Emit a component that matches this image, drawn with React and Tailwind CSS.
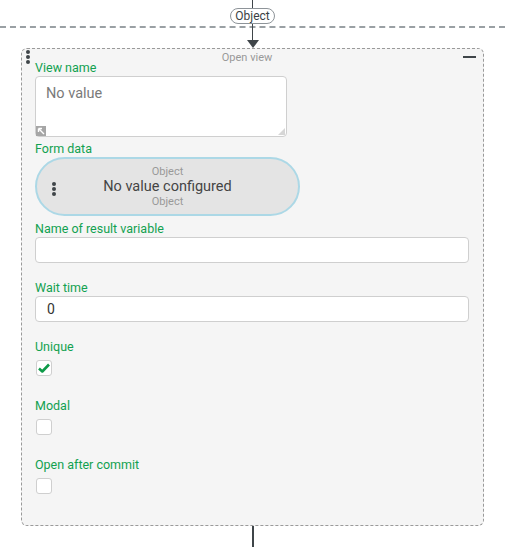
import { useState } from "react";

const font = { fontFamily: "Roboto, 'Liberation Sans', sans-serif" };

function Kebab({ className = "" }) {
  return (
    <div className={`flex flex-col gap-[1.5px] ${className}`}>
      <span className="block w-[3.5px] h-[3.5px] rounded-full bg-[#3f4549]" />
      <span className="block w-[3.5px] h-[3.5px] rounded-full bg-[#3f4549]" />
      <span className="block w-[3.5px] h-[3.5px] rounded-full bg-[#3f4549]" />
    </div>
  );
}

function Label({ children, className = "" }) {
  return (
    <div className={`text-[12.5px] leading-[16px] text-[#12a150] ${className}`}>
      {children}
    </div>
  );
}

function Checkbox({ checked }) {
  return (
    <div className="w-[16px] h-[16px] ml-[1px] rounded-[3px] border border-[#cfcfcf] bg-white flex items-center justify-center">
      {checked && (
        <svg width="12" height="10" viewBox="0 0 12 10">
          <path d="M1 5.5 L4.3 8.5 L11 1.5" fill="none" stroke="#0e9a48" strokeWidth="2.6" strokeLinejoin="round" />
        </svg>
      )}
    </div>
  );
}

export default function App() {
  const [unique, setUnique] = useState(true);

  return (
    <div className="relative w-[505px] h-[547px] bg-white overflow-hidden" style={font}>
      {/* lane separator */}
      <div className="absolute left-0 right-0 top-[26px] border-t-2 border-dashed border-[#9aa0a4]" />

      {/* incoming connector */}
      <div className="relative flex flex-col items-center ml-[6px] w-[493px]">
        <div className="w-[1.5px] h-[8px] bg-[#3f4549]" />
        <div className="px-[4px] h-[16px] leading-[14px] text-[12px] text-[#3a3f44] bg-white border border-[#8e9499] rounded-full">
          Object
        </div>
        <div className="w-[1.5px] h-[16px] bg-[#3f4549]" />
        <svg width="12" height="8" viewBox="0 0 12 8" className="block">
          <path d="M0 0 L12 0 L6 8 Z" fill="#3f4549" />
        </svg>
      </div>

      {/* node card */}
      <div className="relative ml-[21px] w-[463px] h-[478px] bg-[#f5f5f5] border border-dashed border-[#9a9a9a] rounded-[6px] pl-[13px] pr-[14px]">
        <Kebab className="absolute left-[4px] top-[1px]" />
        <div className="absolute right-[7px] top-[7px] w-[13px] h-[2px] bg-[#3f4549]" />

        <div className="h-[11px] leading-[17px] text-[11px] text-[#999] text-center pr-[10px]">Open view</div>

        <Label>View name</Label>
        <div className="relative w-[252px] h-[61px] bg-white border border-[#cfcfcf] rounded-[4px] px-[10px] pt-[4px]">
          <span className="text-[14.5px] leading-[20px] text-[#7a7a7a]">No value</span>
          <div className="absolute left-0 bottom-0 w-[10px] h-[10px] bg-[#a6a6a6] flex items-center justify-center">
            <svg width="8" height="8" viewBox="0 0 8 8">
              <path d="M7 7 L2 2 M1.5 1.5 L5 1.5 M1.5 1.5 L1.5 5" stroke="#fff" strokeWidth="1.4" fill="none" />
            </svg>
          </div>
          <svg width="7" height="7" viewBox="0 0 7 7" className="absolute right-[1px] bottom-[1px]">
            <path d="M7 0 L7 7 L0 7 Z" fill="#d6d6d6" />
          </svg>
        </div>

        <Label className="mt-[4px]">Form data</Label>
        <div className="relative w-[265px] h-[59px] rounded-full bg-[#e4e4e4] border-2 border-[#acd8e6] flex flex-col items-center justify-center">
          <Kebab className="absolute left-[15px] top-[23px]" />
          <div className="text-[11px] leading-[15px] text-[#999]">Object</div>
          <div className="text-[14.5px] leading-[15px] text-[#444]">No value configured</div>
          <div className="text-[11px] leading-[15px] text-[#999]">Object</div>
        </div>

        <Label className="mt-[5px]">Name of result variable</Label>
        <div className="w-[434px] h-[26px] bg-white border border-[#cfcfcf] rounded-[4px]" />

        <Label className="mt-[17px]">Wait time</Label>
        <div className="w-[434px] h-[26px] bg-white border border-[#cfcfcf] rounded-[4px] px-[11px] flex items-center text-[14px] text-[#333]">
          0
        </div>

        <Label className="mt-[17px] mb-[5px]">Unique</Label>
        <div onClick={() => setUnique(!unique)}>
          <Checkbox checked={unique} />
        </div>

        <Label className="mt-[22px] mb-[5px]">Modal</Label>
        <Checkbox checked={false} />

        <Label className="mt-[22px] mb-[5px]">Open after commit</Label>
        <Checkbox checked={false} />
      </div>

      {/* outgoing connector */}
      <div className="ml-[252px] w-[1.5px] h-[22px] bg-[#3f4549]" />
    </div>
  );
}
